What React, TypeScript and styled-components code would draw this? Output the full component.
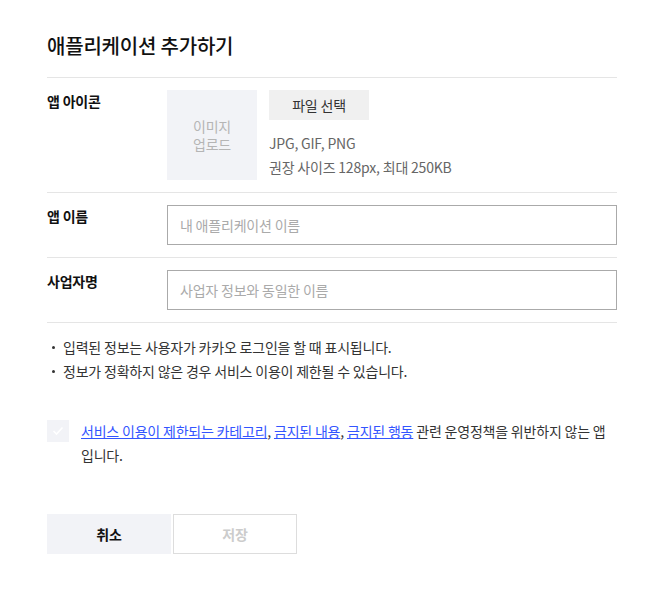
import React from 'react';
import styled, { createGlobalStyle } from 'styled-components';

const Global = createGlobalStyle`
  body {
    margin: 0;
    background: #fff;
    font-family: "Noto Sans CJK KR", "Noto Sans", sans-serif;
    color: #333;
    letter-spacing: -0.2px;
  }
  * { box-sizing: border-box; }
`;

function App() {
  return (
    <>
      <Global />
      <Page>
        <Title>애플리케이션 추가하기</Title>
        <Row>
          <Label>앱 아이콘</Label>
          <IconField>
            <ImageBox>이미지<br />업로드</ImageBox>
            <div>
              <FileBtn>파일 선택</FileBtn>
              <Hint>
                JPG, GIF, PNG<br />
                권장 사이즈 128px, 최대 250KB
              </Hint>
            </div>
          </IconField>
        </Row>
        <Row>
          <Label>앱 이름</Label>
          <Input placeholder="내 애플리케이션 이름" />
        </Row>
        <Row>
          <Label>사업자명</Label>
          <Input placeholder="사업자 정보와 동일한 이름" />
        </Row>
        <Notes>
          <li>입력된 정보는 사용자가 카카오 로그인을 할 때 표시됩니다.</li>
          <li>정보가 정확하지 않은 경우 서비스 이용이 제한될 수 있습니다.</li>
        </Notes>
        <Agree>
          <Check>
            <svg width="12" height="10" viewBox="0 0 12 10">
              <path d="M1.5 5 L4.5 8 L10.5 1.5" fill="none" stroke="#fff" strokeWidth="1.6" />
            </svg>
          </Check>
          <AgreeText>
            <a href="#">서비스 이용이 제한되는 카테고리</a>, <a href="#">금지된 내용</a>,{' '}
            <a href="#">금지된 행동</a> 관련 운영정책을 위반하지 않는 앱입니다.
          </AgreeText>
        </Agree>
        <Actions>
          <Button>취소</Button>
          <Button $disabled>저장</Button>
        </Actions>
      </Page>
    </>
  );
}

export default App;

const Page = styled.div`
  width: 570px;
  margin-left: 47px;
  padding-top: 31px;
`;

const Title = styled.h1`
  margin: 0;
  font-size: 20px;
  font-weight: 500;
  line-height: 30px;
  color: #111;
  padding-bottom: 16px;
  border-bottom: 1px solid #e5e5e5;
`;

const Row = styled.div`
  display: flex;
  padding: 12px 0 12px;
  border-bottom: 1px solid #e5e5e5;
`;

const Label = styled.div`
  width: 120px;
  flex-shrink: 0;
  font-size: 14px;
  font-weight: 700;
  line-height: 20px;
  color: #111;
  padding-top: 1px;
`;

const IconField = styled.div`
  display: flex;
  gap: 12px;
`;

const ImageBox = styled.div`
  width: 90px;
  height: 90px;
  background: #f2f3f7;
  color: #b5b5b5;
  font-size: 14px;
  line-height: 18px;
  display: flex;
  align-items: center;
  justify-content: center;
  text-align: center;
`;

const FileBtn = styled.button`
  width: 100px;
  height: 30px;
  border: none;
  background: #f0f0f0;
  color: #333;
  font-family: inherit;
  font-size: 14px;
  letter-spacing: inherit;
  padding: 0;
`;

const Hint = styled.div`
  margin-top: 11px;
  font-size: 14px;
  line-height: 24px;
  color: #666;
`;

const Input = styled.input`
  flex: 1;
  height: 40px;
  border: 1px solid #aaa;
  padding: 0 12px;
  font-family: inherit;
  font-size: 14px;
  letter-spacing: inherit;
  color: #333;
  outline: none;
  &::placeholder {
    color: #aaa;
  }
`;

const Notes = styled.ul`
  list-style: none;
  margin: 0;
  padding: 12px 0 0;
  font-size: 14px;
  line-height: 24px;
  color: #333;
  li {
    position: relative;
    padding-left: 16px;
  }
  li::before {
    content: "";
    position: absolute;
    left: 5px;
    top: 11px;
    width: 3px;
    height: 3px;
    border-radius: 50%;
    background: #333;
  }
`;

const Agree = styled.div`
  display: flex;
  align-items: flex-start;
  gap: 12px;
  margin-top: 36px;
`;

const Check = styled.span`
  width: 22px;
  height: 22px;
  flex-shrink: 0;
  background: #f2f3f7;
  display: flex;
  align-items: center;
  justify-content: center;
  margin-top: 1px;
`;

const AgreeText = styled.p`
  margin: 0;
  font-size: 14px;
  line-height: 24px;
  color: #333;
  width: 527px;
  word-break: break-all;
  a {
    color: #3355ff;
  }
`;

const Actions = styled.div`
  display: flex;
  gap: 2px;
  margin-top: 47px;
`;

const Button = styled.button<{ $disabled?: boolean }>`
  width: 124px;
  height: 40px;
  font-family: inherit;
  font-size: 14px;
  font-weight: 700;
  letter-spacing: inherit;
  padding: 0;
  border: ${p => (p.$disabled ? '1px solid #ddd' : 'none')};
  background: ${p => (p.$disabled ? '#fff' : '#f2f3f7')};
  color: ${p => (p.$disabled ? '#ccc' : '#111')};
`;
